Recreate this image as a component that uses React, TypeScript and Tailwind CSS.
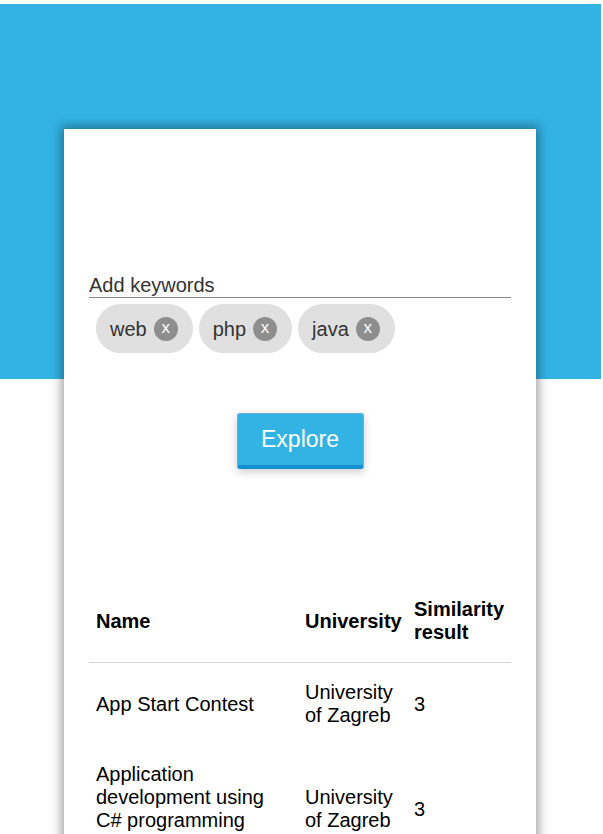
import React from "react";

const chips = ["web", "php", "java"];

function Chip({ label }: { label: string }) {
  return (
    <div className="flex h-[49px] items-center rounded-full bg-[#e0e0e0] pl-[14px] pr-[15px] text-[20px] text-[#333]">
      <span>{label}</span>
      <span className="ml-[7px] flex h-[24px] w-[24px] items-center justify-center rounded-full bg-[#8e8e8e] pb-[2px] text-[17px] leading-none text-white">
        x
      </span>
    </div>
  );
}

export default function App() {
  return (
    <div
      className="relative min-h-[834px] overflow-hidden bg-white"
      style={{ fontFamily: '"Liberation Sans", Arial, sans-serif' }}
    >
      <div className="absolute left-0 top-[4px] h-[375px] w-[601px] bg-[#33b3e4]" />
      <div className="relative pt-[129px]">
        <div className="ml-[64px] w-[472px] min-h-[705px] bg-white shadow-[0_0_10px_3px_rgba(0,0,0,0.35)]">
          <div className="px-[25px] pt-[145px]">
            <div className="border-b border-[#888] text-[20px] leading-[23px] text-[#333]">
              Add keywords
            </div>
            <div className="ml-[7px] mt-[6px] flex gap-[6px]">
              {chips.map((c) => (
                <Chip key={c} label={c} />
              ))}
            </div>
            <div className="mt-[60px] flex justify-center">
              <button className="h-[56px] w-[127px] rounded-[3px] border border-[#6aaee8] border-b-[4px] border-b-[#1590d2] bg-[#33b3e4] text-[23px] text-white shadow-[0_3px_8px_rgba(0,0,0,0.2)]">
                Explore
              </button>
            </div>
            <table className="mt-[111px] w-[422px] table-fixed border-collapse text-[20px] leading-[23px] text-black">
              <colgroup>
                <col className="w-[209px]" />
                <col className="w-[109px]" />
                <col className="w-[104px]" />
              </colgroup>
              <thead>
                <tr className="border-b border-[#d0d0d0]">
                  <th className="px-[7px] py-[18px] text-left align-middle font-bold">Name</th>
                  <th className="px-[7px] py-[18px] text-left align-middle font-bold">University</th>
                  <th className="px-[7px] py-[18px] text-left align-middle font-bold">Similarity result</th>
                </tr>
              </thead>
              <tbody>
                <tr>
                  <td className="px-[7px] py-[18px] align-middle">App Start Contest</td>
                  <td className="px-[7px] py-[18px] align-middle">University of Zagreb</td>
                  <td className="px-[7px] py-[18px] align-middle">3</td>
                </tr>
                <tr>
                  <td className="px-[7px] py-[18px] align-middle">Application development using C# programming language</td>
                  <td className="px-[7px] py-[18px] align-middle">University of Zagreb</td>
                  <td className="px-[7px] py-[18px] align-middle">3</td>
                </tr>
              </tbody>
            </table>
          </div>
        </div>
      </div>
    </div>
  );
}
